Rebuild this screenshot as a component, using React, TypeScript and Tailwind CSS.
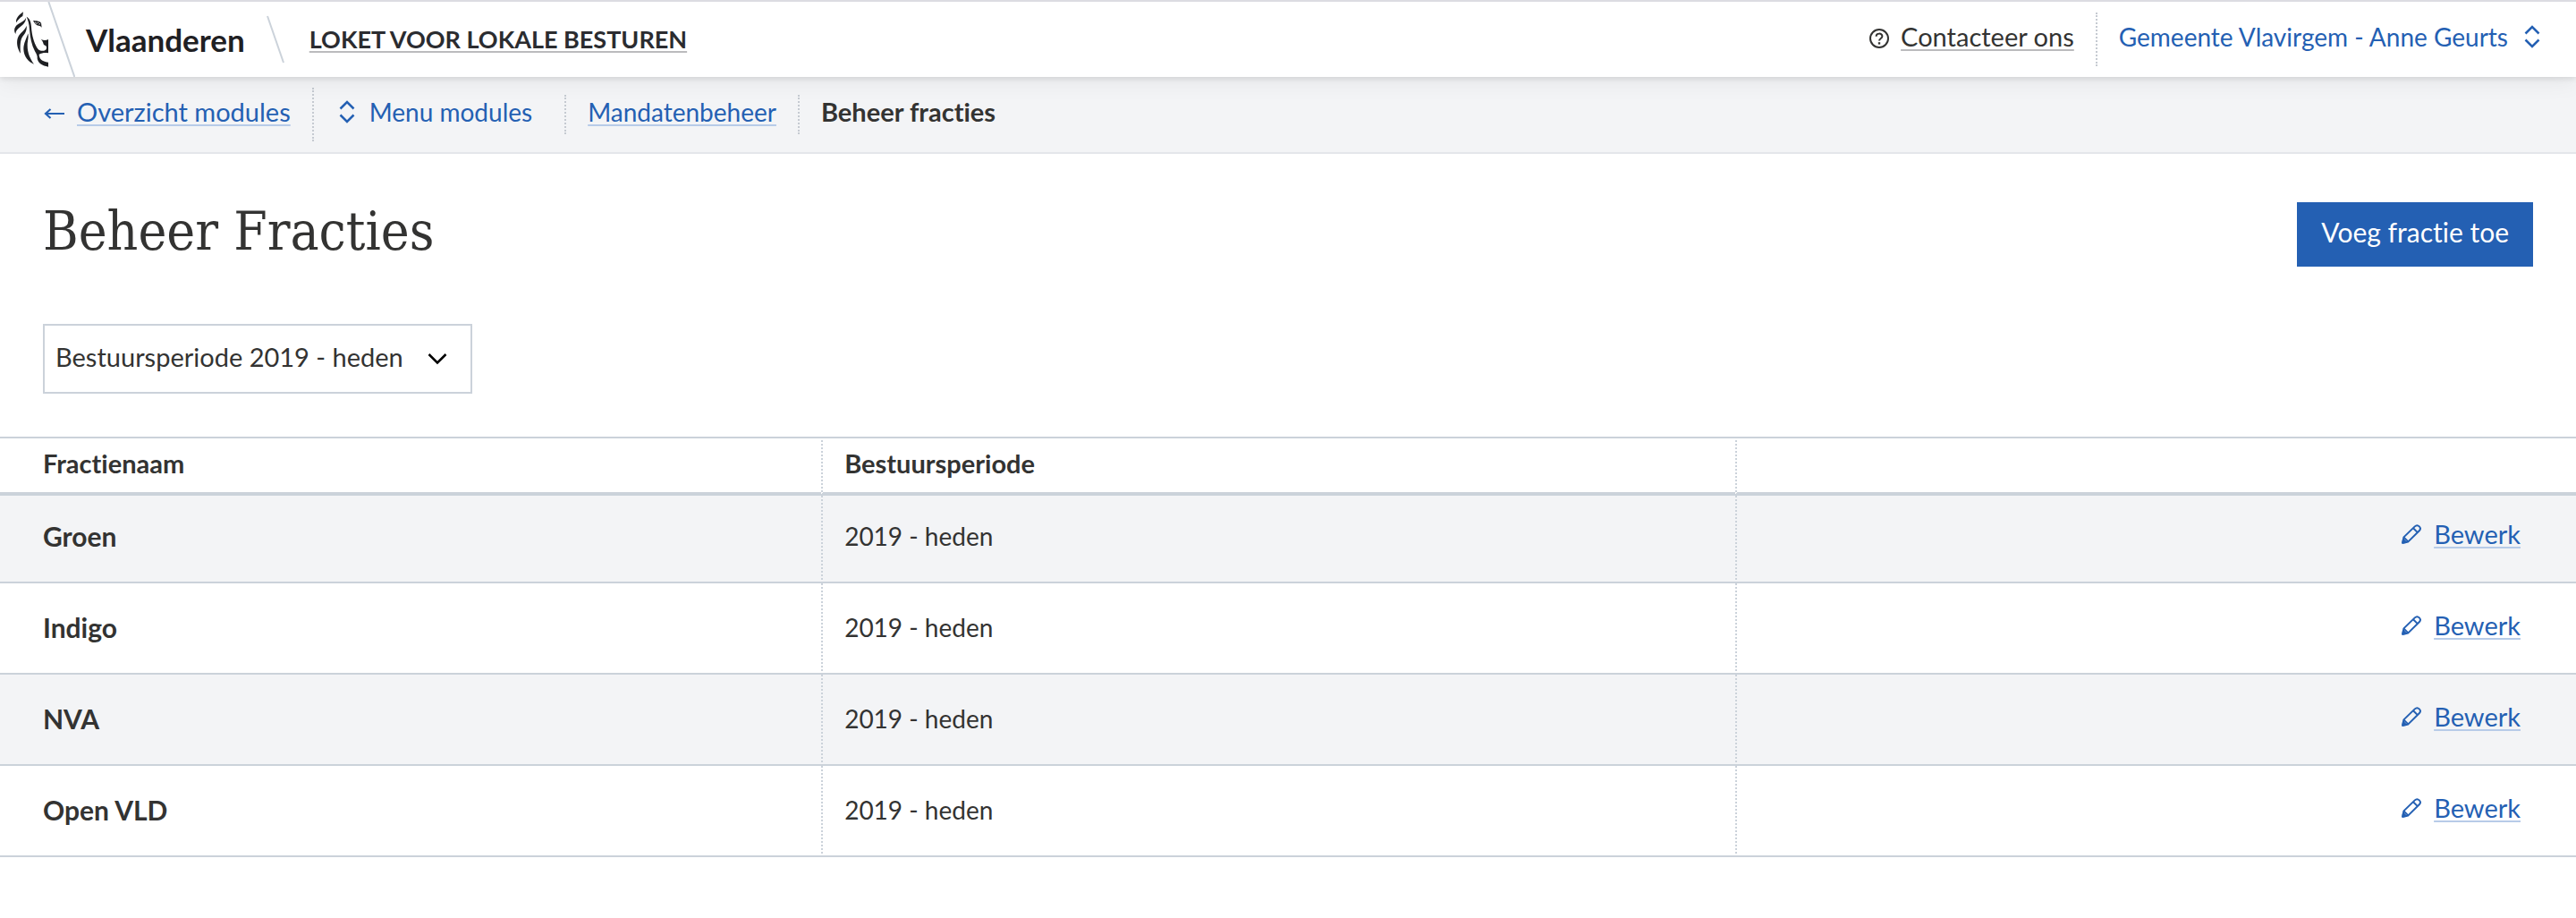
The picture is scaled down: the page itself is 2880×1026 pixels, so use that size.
import type { ReactNode } from "react";

const fracties = ["Groen", "Indigo", "NVA", "Open VLD"];

function Lion() {
  return (
    <svg viewBox="0 0 252 252" className="h-[84px] w-[84px] shrink-0" aria-hidden="true">
      <g transform="translate(0 -6)">
        <g fill="#1f2023">
          <path d="M54 76C53 60 64 49 78 40L76 54C68 58 61 66 54 76Z" />
          <path d="M87 60C87 74 78 82 68 90C57 98 53 104 52 114C44 100 50 87 62 80C73 74 82 70 87 60Z" />
          <path d="M89 86C91 102 84 112 76 122C68 134 67 150 69 179C57 162 54 140 61 124C67 109 83 104 89 86Z" />
          <path d="M94 112C97 126 92 136 92 152C92 178 101 196 114 215C95 208 80 190 79 165C79 144 88 132 94 112Z" />
          <path d="M89 56C99 61 104 72 105 90C107 120 114 142 123 158C127 165 131 168 138 170C146 171 153 170 155 165C158 158 156 153 148 151C144 146 146 140 137 131C146 136 154 136 162 132V178C150 176 140 178 131 182C131 196 140 206 162 209V224C142 221 127 211 125 196C126 188 123 182 117 172C106 150 101 126 99 98C98 80 94 68 89 56Z" />
          <path d="M111 69C120 70 133 70 138 77L140 92C137 88 134 86 130 86C122 86 116 79 111 69Z" />
        </g>
        <path d="M118 74L123 80M126 75L129 78M131 82L135 79" stroke="#fff" strokeWidth="3" fill="none" />
        <path d="M163 6L250 258" stroke="#cbd2da" strokeWidth="6" />
      </g>
    </svg>
  );
}

function UpDown() {
  return (
    <svg viewBox="0 0 18 26" className="h-[26px] w-[18px] shrink-0" fill="none" stroke="currentColor" strokeWidth="2.5" aria-hidden="true">
      <path d="M1.5 9.5L9 2L16.5 9.5M1.5 16.5L9 24L16.5 16.5" />
    </svg>
  );
}

function Pencil() {
  return (
    <svg viewBox="0 0 22 22" className="h-[22px] w-[22px] shrink-0" fill="none" stroke="currentColor" strokeWidth="2" strokeLinejoin="round" aria-hidden="true">
      <path d="M1.2 20.8L2.4 14.4L14.8 2.4C18.2-.8 23 4 19.7 7.3L7.4 19.4ZM13 4.2L17.9 9.1M2.4 14.4L7.4 19.4" />
      <path d="M1.2 20.8L2 17L5 20Z" fill="currentColor" />
    </svg>
  );
}

function Divider({ tall = false }: { tall?: boolean }) {
  return <span className={`shrink-0 border-l-2 border-dotted border-[#c5cad1] ${tall ? "h-15" : "h-11"}`} />;
}

function TextLink({ children, dark = false }: { children: ReactNode; dark?: boolean }) {
  return (
    <span
      className={`underline decoration-2 underline-offset-[3px] [text-decoration-skip-ink:none] ${dark ? "decoration-[#bbbbbd]" : "decoration-[#b7cbe8]"}`}
    >
      {children}
    </span>
  );
}

export default function App() {
  return (
    <div className="min-h-screen bg-white font-['Lato',sans-serif] text-[28px] leading-9 text-[#333332] [font-variant-ligatures:none]">
      <header className="relative z-10 flex h-[86px] items-center border-t-2 border-[#dcdce2] bg-white shadow-[0_2px_6px_rgba(0,0,0,0.1),0_6px_24px_rgba(0,0,0,0.06)]">
        <Lion />
        <span className="ml-3 text-[35px] font-bold text-[#1f2023]">Vlaanderen</span>
        <svg viewBox="0 0 20 54" className="ml-6 h-[54px] w-5 shrink-0" aria-hidden="true">
          <path d="M1 1L19 53" stroke="#cbd2da" strokeWidth="2" />
        </svg>
        <a href="#loket" className="ml-7 text-[27px] font-bold text-[#2b2c30]">
          <TextLink dark>LOKET VOOR LOKALE BESTUREN</TextLink>
        </a>
        <nav className="ml-auto flex items-center pr-10" aria-label="Gebruiker">
          <a href="#contact" className="flex items-center gap-3 pb-1.5 text-[29px] text-[#333332]">
            <svg viewBox="0 0 24 24" className="mt-1 h-6 w-6" fill="none" stroke="currentColor" strokeWidth="2" aria-hidden="true">
              <circle cx="12" cy="12" r="10" />
              <path d="M8.6 9.8C8.6 5.6 15.4 5.6 15.4 9.6C15.4 12 12 12 12 14.6" />
              <path d="M12 16.2V18.6" strokeWidth="2.4" />
            </svg>
            <TextLink dark>Contacteer ons</TextLink>
          </a>
          <span className="ml-6 flex">
            <Divider tall />
          </span>
          <button type="button" className="ml-6 flex items-center gap-[18px] pb-1.5 text-[#2460b3]">
            Gemeente Vlavirgem - Anne Geurts
            <UpDown />
          </button>
        </nav>
      </header>

      <nav className="flex h-[86px] items-center border-b-2 border-[#e4e6ea] bg-[#f3f4f6] pl-12 text-[#2460b3]" aria-label="Kruimelpad">
        <a href="#modules" className="flex items-center gap-3.5 pr-6 pb-1.5 text-[29px]">
          <svg viewBox="0 0 24 14" className="mt-1 h-3.5 w-6" fill="none" stroke="currentColor" strokeWidth="2.2" aria-hidden="true">
            <path d="M24 7H3M8.5 2L3 7L8.5 12" />
          </svg>
          <TextLink>Overzicht modules</TextLink>
        </a>
        <Divider tall />
        <button type="button" className="flex items-center gap-4 pr-9 pb-1.5 pl-7">
          <UpDown />
          Menu modules
        </button>
        <Divider />
        <a href="#mandatenbeheer" className="px-6 pb-1.5">
          <TextLink>Mandatenbeheer</TextLink>
        </a>
        <Divider />
        <span className="pb-1.5 pl-6 text-[29px] font-bold text-[#333332]" aria-current="page">
          Beheer fracties
        </span>
      </nav>

      <main>
        <div className="flex items-start justify-between px-12 pt-[54px]">
          <h1 className="font-['DejaVu_Serif_Condensed','DejaVu_Serif',serif] text-[60px] leading-[64px]">Beheer Fracties</h1>
          <button type="button" className="flex h-[72px] items-center bg-[#2460b3] px-[27px] pb-1.5 text-[30px] text-white">
            Voeg fractie toe
          </button>
        </div>

        <div className="mx-12 mt-16 grid w-[480px] items-center">
          <select
            aria-label="Bestuursperiode"
            className="col-start-1 row-start-1 h-[78px] w-full appearance-none border-2 border-[#cbd2da] bg-white pr-16 pb-1 pl-3 text-[29px]"
          >
            <option>Bestuursperiode 2019 - heden</option>
          </select>
          <svg viewBox="0 0 22 14" className="pointer-events-none col-start-1 row-start-1 mr-7 h-3.5 w-[22px] justify-self-end" fill="none" stroke="#000" strokeWidth="2.5" aria-hidden="true">
            <path d="M1.5 2L11 11.5L20.5 2" />
          </svg>
        </div>

        <table className="mt-12 w-full table-fixed border-separate border-spacing-0 text-left text-[29px] [&_td]:border-[#cbd2da] [&_th]:border-[#cbd2da]">
          <colgroup>
            <col className="w-[31.88%]" />
            <col className="w-[35.48%]" />
            <col />
          </colgroup>
          <thead>
            <tr className="h-[66px]">
              <th className="border-t-2 border-b-4 pb-1 pl-12">Fractienaam</th>
              <th className="border-t-2 border-b-4 border-l-2 pb-1 pl-6 [border-left-style:dotted]">Bestuursperiode</th>
              <th aria-label="Acties" className="border-t-2 border-b-4 border-l-2 [border-left-style:dotted]" />
            </tr>
          </thead>
          <tbody>
            {fracties.map((naam) => (
              <tr key={naam} className="h-[102px] odd:bg-[#f3f4f6] first:h-[98px] first:[&>*]:pb-1.5 [&>*]:pb-0.5">
                <th scope="row" className="border-b-2 pl-12 text-[30px]">
                  {naam}
                </th>
                <td className="border-b-2 border-l-2 pl-6 [border-left-style:dotted]">
                  <span className="text-[28px]">2019 - heden</span>
                </td>
                <td className="border-b-2 border-l-2 pr-[62px] [border-left-style:dotted]">
                  <a href={`#${naam}`} className="mb-1 ml-auto flex w-fit items-center gap-3.5 text-[#2460b3]">
                    <Pencil />
                    <TextLink>Bewerk</TextLink>
                  </a>
                </td>
              </tr>
            ))}
          </tbody>
        </table>
      </main>
    </div>
  );
}
